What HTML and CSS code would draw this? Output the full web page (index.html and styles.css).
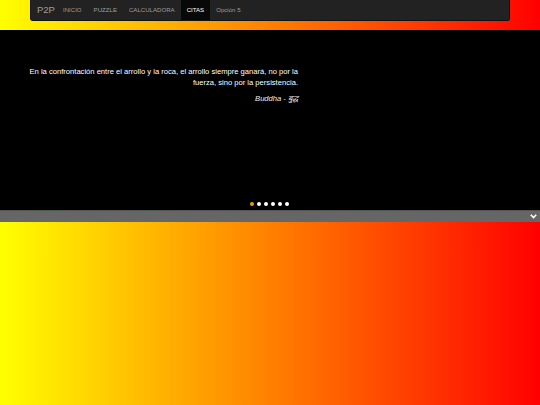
FILE: index.html
```html
<!DOCTYPE html>
<html lang="es">
<head>
<meta charset="utf-8">
<title>P2P - Citas</title>
<link rel="stylesheet" href="styles.css">
</head>
<body>
<div class="page">
  <nav class="navbar">
    <a class="brand" href="#">P2P</a>
    <ul class="nav">
      <li><a href="#">INICIO</a></li>
      <li><a href="#">PUZZLE</a></li>
      <li><a href="#">CALCULADORA</a></li>
      <li class="active"><a href="#">CITAS</a></li>
      <li><a href="#">Opción 5</a></li>
    </ul>
  </nav>
  <section class="carousel">
    <blockquote class="quote">
      <p>En la confrontación entre el arrollo y la roca, el arrollo siempre ganará, no por la fuerza, sino por la persistencia.</p>
      <footer class="author">Buddha - बुद्ध</footer>
    </blockquote>
    <div class="dots">
      <span class="dot on"></span><span class="dot"></span><span class="dot"></span><span class="dot"></span><span class="dot"></span><span class="dot"></span>
    </div>
  </section>
  <div class="bar">
    <svg class="chev" width="7" height="5" viewBox="0 0 7 5"><path d="M0.8 0.8 L3.5 3.6 L6.2 0.8" fill="none" stroke="#fff" stroke-width="1.6"/></svg>
  </div>
</div>
</body>
</html>
```
FILE: styles.css
```css
html, body {
  margin: 0;
  padding: 0;
  height: 100%;
}
body {
  background: linear-gradient(to right, #ffff00 0%, #ff8000 50%, #ff0000 100%);
  font-family: "Liberation Sans", Arial, sans-serif;
}
.page {
  display: flex;
  flex-direction: column;
}
.navbar {
  margin: 0 30px;
  height: 21px;
  box-sizing: border-box;
  background: #222;
  border: 1px solid #111;
  border-top: none;
  border-radius: 0 0 3px 3px;
  display: flex;
  align-items: stretch;
  padding-left: 5px;
}
.brand {
  color: #9d9d9d;
  text-decoration: none;
  font-size: 9.5px;
  line-height: 20px;
  padding: 0 2px 0 1px;
}
.nav {
  list-style: none;
  margin: 0;
  padding: 0;
  display: flex;
}
.nav li a {
  display: block;
  color: #9d9d9d;
  text-decoration: none;
  font-size: 6.1px;
  line-height: 20px;
  padding: 0 6px;
}
.nav li.active a {
  background: #080808;
  color: #fff;
}
.carousel {
  margin-top: 9px;
  height: 180px;
  background: #000;
  position: relative;
}
.quote {
  margin: 36px 0 0 27px;
  width: 271px;
  text-align: right;
  color: #fff;
}
.quote p {
  margin: 0;
  font-size: 7.6px;
  line-height: 11px;
}
.author {
  margin-top: 5px;
  font-size: 7.6px;
  font-style: italic;
  color: #eee;
}
.dots {
  position: absolute;
  left: 250px;
  top: 172px;
  display: flex;
  gap: 3px;
}
.dot {
  width: 4px;
  height: 4px;
  border-radius: 50%;
  background: #fff;
}
.dot.on {
  background: #f7941d;
}
.bar {
  height: 12px;
  box-sizing: border-box;
  background: #666;
  border-top: 1px solid #555;
  display: flex;
  justify-content: flex-end;
  align-items: center;
  padding-right: 3px;
}
```
